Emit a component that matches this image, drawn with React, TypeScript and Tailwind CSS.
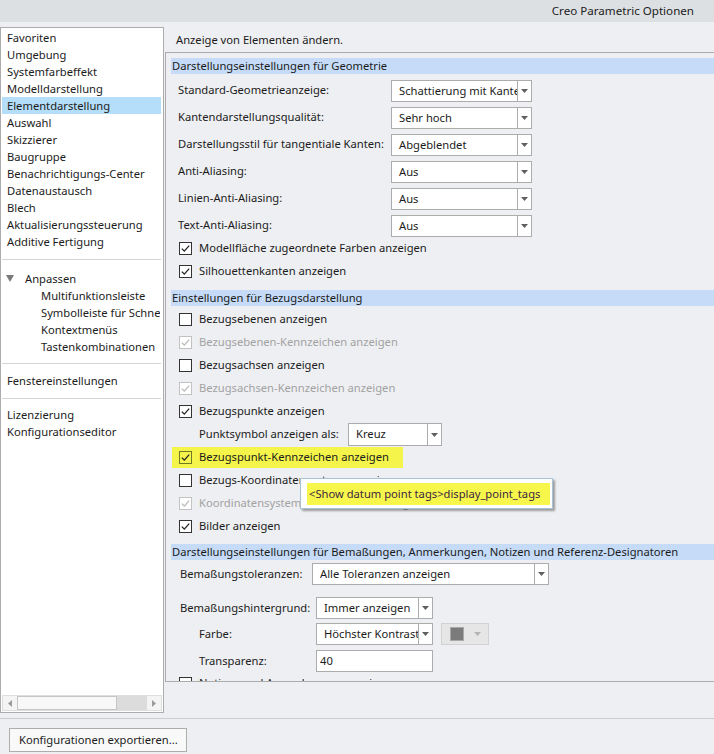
import React from "react";

const Arrow = ({ color = "#606060" }: { color?: string }) => (
  <svg width="7" height="4" viewBox="0 0 7 4">
    <path d="M0 0 H7 L3.5 4 Z" fill={color} />
  </svg>
);

const Select = ({ value, className }: { value: string; className: string }) => (
  <div className={`flex border border-[#acacac] bg-white ${className}`}>
    <div className="flex-1 overflow-hidden whitespace-nowrap pl-[7px] leading-[20px]">{value}</div>
    <div className="w-[14px] border-l border-[#acacac] flex items-center justify-center">
      <Arrow />
    </div>
  </div>
);

const Check = ({ checked, disabled, mark }: { checked?: boolean; disabled?: boolean; mark?: boolean }) => (
  <div
    className={`w-[13px] h-[13px] border flex items-center justify-center shrink-0 ${
      disabled ? "border-[#c2c2c2] bg-white" : mark ? "border-[#6f7a28] bg-transparent" : "border-[#333333] bg-white"
    }`}
  >
    {checked ? (
      <svg width="11" height="11" viewBox="0 0 11 11">
        <path d="M1.8 5.6 L4.3 8.1 L9.2 2.6" fill="none" stroke={disabled ? "#b9b9b9" : "#222"} strokeWidth="1.3" />
      </svg>
    ) : null}
  </div>
);

const CheckRow = ({ label, checked, disabled }: { label: string; checked?: boolean; disabled?: boolean }) => (
  <div className="h-[23px] flex items-center pl-[8px] gap-[7px] whitespace-nowrap">
    <Check checked={checked} disabled={disabled} />
    <span className={disabled ? "text-[#a2a2a2]" : ""}>{label}</span>
  </div>
);

const Header = ({ children, className = "" }: { children: React.ReactNode; className?: string }) => (
  <div className={`h-[16px] bg-[#c6dbf7] pl-[1px] leading-[16px] whitespace-nowrap overflow-hidden ${className}`}>
    {children}
  </div>
);

const DropRow = ({ label, value }: { label: string; value: string }) => (
  <div className="h-[27px] flex items-center pl-[7px]">
    <div className="w-[213px] whitespace-nowrap">{label}</div>
    <Select value={value} className="w-[141px] h-[22px]" />
  </div>
);

const navMain = [
  "Favoriten",
  "Umgebung",
  "Systemfarbeffekt",
  "Modelldarstellung",
  "Elementdarstellung",
  "Auswahl",
  "Skizzierer",
  "Baugruppe",
  "Benachrichtigungs-Center",
  "Datenaustausch",
  "Blech",
  "Aktualisierungssteuerung",
  "Additive Fertigung",
];

const navSub = ["Multifunktionsleiste", "Symbolleiste für Schnellzugriff", "Kontextmenüs", "Tastenkombinationen"];

const Sep = ({ className }: { className: string }) => <div className={`h-px bg-[#d4d4d4] ml-[1px] mr-[2px] ${className}`} />;

export default function App() {
  return (
    <div className="w-[714px] h-[754px] overflow-hidden relative bg-[#eeeff2] text-[#1b1b1b] text-[11.2px] font-['Noto_Sans',sans-serif]">
      {/* title bar */}
      <div className="h-[22px] bg-[#dde0e3] flex items-center justify-end pr-[20px] text-[11.6px] text-[#222]">
        Creo Parametric Optionen
      </div>

      <div className="flex mt-[5px]">
        {/* left nav */}
        <div className="w-[164px] h-[686px] border border-[#acacac] bg-white flex flex-col overflow-hidden">
          <div className="pt-[1px]">
            {navMain.map((item) => (
              <div
                key={item}
                className={`h-[17px] leading-[17px] ml-[1px] mr-[2px] pl-[5px] whitespace-nowrap ${
                  item === "Elementdarstellung" ? "bg-[#b5defa]" : ""
                }`}
              >
                {item}
              </div>
            ))}
          </div>
          <Sep className="mt-[9px]" />
          <div className="h-[17px] leading-[17px] mt-[10px] pl-[5px] flex items-center whitespace-nowrap">
            <svg width="8" height="7" viewBox="0 0 8 7" className="mr-[11px]">
              <path d="M0 0 H8 L4 7 Z" fill="#7a7a7a" />
            </svg>
            Anpassen
          </div>
          {navSub.map((item) => (
            <div key={item} className="h-[17px] leading-[17px] pl-[40px] mr-[3px] whitespace-nowrap overflow-hidden">
              {item}
            </div>
          ))}
          <Sep className="mt-[8px]" />
          <div className="h-[17px] leading-[17px] mt-[8px] pl-[6px]">Fenstereinstellungen</div>
          <Sep className="mt-[9px]" />
          <div className="h-[17px] leading-[17px] mt-[7px] pl-[6px]">Lizenzierung</div>
          <div className="h-[17px] leading-[17px] pl-[6px]">Konfigurationseditor</div>

          {/* horizontal scrollbar */}
          <div className="mt-auto mx-[1px] mb-[1px] h-[16px] flex border border-[#dedede] bg-[#f4f4f4]">
            <div className="w-[14px] flex items-center justify-center">
              <svg width="4" height="7" viewBox="0 0 4 7">
                <path d="M4 0 V7 L0 3.5 Z" fill="#9a9a9a" />
              </svg>
            </div>
            <div className="w-[100px] bg-[#f8f8f8] border border-[#c6c6c6]" />
            <div className="flex-1 bg-[#dcdcdc]" />
            <div className="w-[14px] flex items-center justify-center">
              <svg width="4" height="7" viewBox="0 0 4 7">
                <path d="M0 0 V7 L4 3.5 Z" fill="#9a9a9a" />
              </svg>
            </div>
          </div>
        </div>

        {/* right area */}
        <div className="flex-1 pl-px">
          <div className="h-[25px] leading-[16px] pt-[5px] pl-[11px]">Anzeige von Elementen ändern.</div>
          <div className="h-[630px] border-l border-t border-b border-[#acacac] pl-[5px] pt-[5px] overflow-hidden">
            <Header>Darstellungseinstellungen für Geometrie</Header>
            <div className="mt-[3px]">
              <DropRow label="Standard-Geometrieanzeige:" value="Schattierung mit Kanten" />
              <DropRow label="Kantendarstellungsqualität:" value="Sehr hoch" />
              <DropRow label="Darstellungsstil für tangentiale Kanten:" value="Abgeblendet" />
              <DropRow label="Anti-Aliasing:" value="Aus" />
              <DropRow label="Linien-Anti-Aliasing:" value="Aus" />
              <DropRow label="Text-Anti-Aliasing:" value="Aus" />
            </div>
            <div className="-mt-[2px]">
              <CheckRow label="Modellfläche zugeordnete Farben anzeigen" checked />
              <CheckRow label="Silhouettenkanten anzeigen" checked />
            </div>

            <Header className="mt-[7px]">Einstellungen für Bezugsdarstellung</Header>
            <div className="mt-[2px]">
              <CheckRow label="Bezugsebenen anzeigen" />
              <CheckRow label="Bezugsebenen-Kennzeichen anzeigen" checked disabled />
              <CheckRow label="Bezugsachsen anzeigen" />
              <CheckRow label="Bezugsachsen-Kennzeichen anzeigen" checked disabled />
              <CheckRow label="Bezugspunkte anzeigen" checked />
              <div className="h-[23px] flex items-center pl-[28px]">
                <div className="w-[149px] whitespace-nowrap">Punktsymbol anzeigen als:</div>
                <Select value="Kreuz" className="w-[94px] h-[23px]" />
              </div>
              <div className="h-[23px] flex items-center">
                <div className="ml-px w-[231px] h-[21px] bg-[#f4f44a] flex items-center pl-[7px] gap-[7px] whitespace-nowrap">
                  <Check checked mark />
                  <span>Bezugspunkt-Kennzeichen anzeigen</span>
                </div>
              </div>
              <CheckRow label="Bezugs-Koordinatensysteme anzeigen" />
              <CheckRow label="Koordinatensystem-Kennzeichen anzeigen" checked disabled />
              <CheckRow label="Bilder anzeigen" checked />
            </div>

            <Header className="mt-[6px]">
              Darstellungseinstellungen für Bemaßungen, Anmerkungen, Notizen und Referenz-Designatoren
            </Header>
            <div className="mt-[3px] flex items-center pl-[9px]">
              <div className="w-[132px] whitespace-nowrap">Bemaßungstoleranzen:</div>
              <Select value="Alle Toleranzen anzeigen" className="w-[237px] h-[22px]" />
            </div>
            <div className="mt-[12px] flex items-center pl-[9px]">
              <div className="w-[136px] whitespace-nowrap">Bemaßungshintergrund:</div>
              <Select value="Immer anzeigen" className="w-[117px] h-[22px]" />
            </div>
            <div className="mt-[4px] flex items-center pl-[28px]">
              <div className="w-[117px] whitespace-nowrap">Farbe:</div>
              <Select value="Höchster Kontrast" className="w-[117px] h-[22px]" />
              <div className="ml-[8px] w-[48px] h-[22px] bg-[#e6e6e6] border border-[#d2d2d2] flex items-center pl-[8px] gap-[10px]">
                <div className="w-[14px] h-[14px] bg-[#7b7b7b] border border-[#a8a8a8]" />
                <Arrow color="#b4b4b4" />
              </div>
            </div>
            <div className="mt-[5px] flex items-center pl-[28px]">
              <div className="w-[117px] whitespace-nowrap">Transparenz:</div>
              <div className="w-[117px] h-[22px] border border-[#acacac] bg-white pl-[3px] leading-[20px]">40</div>
            </div>
            <div>
              <CheckRow label="Notizen und Anmerkungen anzeigen" />
            </div>
          </div>
        </div>
      </div>

      {/* bottom */}
      <div className="h-px bg-[#cacccf] mt-[5px]" />
      <button className="mt-[9px] ml-[9px] w-[178px] h-[24px] bg-[#f9f9f9] border border-[#adadad] text-left pl-[9px] leading-[22px]">
        Konfigurationen exportieren...
      </button>

      {/* tooltip */}
      <div className="absolute left-[300px] top-[478px] w-[253px] h-[31px] bg-white border border-[#a9c1d6] shadow-[2px_2px_2px_rgba(0,0,0,0.35)] pl-[6px] pt-[4px] pr-[2px] pb-[3px]">
        <div className="h-full bg-[#f7f74b] text-[#3c1f40] pl-[2px] leading-[22px] whitespace-nowrap">
          &lt;Show datum point tags&gt;display_point_tags
        </div>
      </div>
    </div>
  );
}
